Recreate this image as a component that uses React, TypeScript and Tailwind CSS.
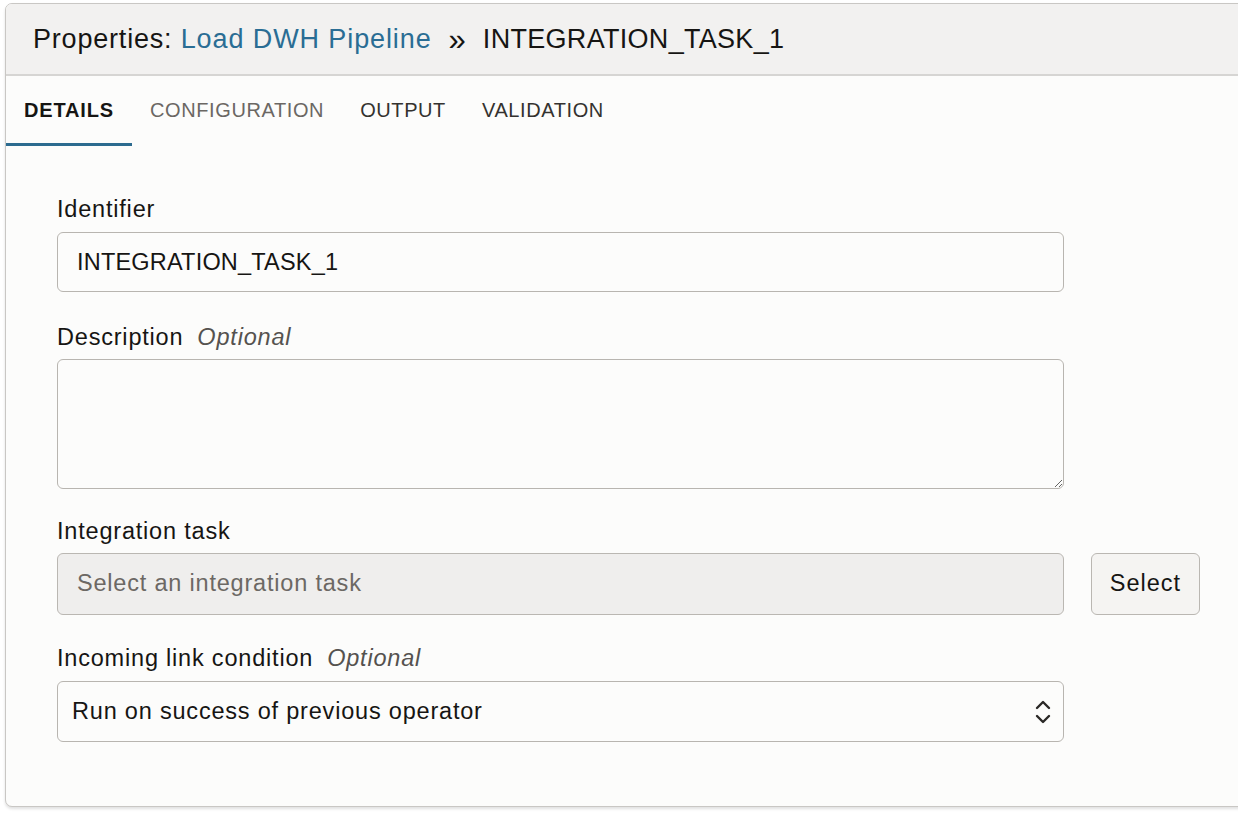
import React from 'react';

const font = { fontFamily: '"Liberation Sans", Arial, Helvetica, sans-serif' };

const tabs = [
  { label: 'DETAILS', cls: 'font-bold text-[#161513] border-[#2c6b8f] tracking-[0.85px]' },
  { label: 'CONFIGURATION', cls: 'text-[#6b6763] border-transparent tracking-[0.6px]' },
  { label: 'OUTPUT', cls: 'text-[#34322f] border-transparent tracking-[0.6px]' },
  { label: 'VALIDATION', cls: 'text-[#34322f] border-transparent tracking-[0.6px]' },
];

function Label({ text, optional }: { text: string; optional?: boolean }) {
  return (
    <div className="flex h-[28px] items-center gap-[14px] text-[23.5px] leading-[28px] tracking-[0.8px] text-[#161513]">
      <span>{text}</span>
      {optional && <span className="italic text-[#55524f]">Optional</span>}
    </div>
  );
}

function Chevrons() {
  return (
    <svg width="18" height="28" viewBox="0 0 18 28" fill="none" aria-hidden>
      <path d="M3 10 L9 4 L15 10" stroke="#2a2826" strokeWidth="2.4" strokeLinecap="round" strokeLinejoin="round" />
      <path d="M3 18 L9 24 L15 18" stroke="#2a2826" strokeWidth="2.4" strokeLinecap="round" strokeLinejoin="round" />
    </svg>
  );
}

export default function App() {
  return (
    <div className="h-[816px] w-[1238px] overflow-hidden bg-white pl-[5px] pt-[3px]" style={font}>
      <div className="flex h-[804px] w-[1260px] flex-col overflow-hidden rounded-[7px] border border-[#c9c7c4] bg-[#fcfcfb] shadow-[0_2px_3px_rgba(0,0,0,0.12)]">
        {/* header */}
        <div className="flex h-[72px] shrink-0 items-center border-b-2 border-[#d6d5d3] bg-[#f2f1f0] pl-[27px] text-[27px] text-[#161513]">
          <span className="tracking-[0.8px]">Properties:&nbsp;</span>
          <span className="tracking-[0.9px] text-[#2a6d94]">Load DWH Pipeline</span>
          <span className="mx-[17px] text-[31px] leading-none">»</span>
          <span className="tracking-[0.3px]">INTEGRATION_TASK_1</span>
        </div>

        {/* tabs */}
        <div className="flex h-[70px] shrink-0">
          {tabs.map((t) => (
            <div
              key={t.label}
              className={`flex h-full items-center border-b-[3px] px-[18px] text-[20px] ${t.cls}`}
            >
              {t.label}
            </div>
          ))}
        </div>

        {/* form */}
        <div className="flex flex-col pl-[51px] pt-[49px]">
          <Label text="Identifier" />
          <input
            readOnly
            value="INTEGRATION_TASK_1"
            className="mt-[9px] h-[60px] w-[1007px] rounded-[6px] border border-[#b8b5b0] bg-[#fcfcfb] pl-[19px] text-[23.5px] tracking-[0.2px] text-[#161513] outline-none"
          />

          <div className="mt-[31px]">
            <Label text="Description" optional />
          </div>
          <textarea
            className="mt-[8px] h-[130px] w-[1007px] resize rounded-[6px] border border-[#b8b5b0] bg-[#fcfcfb] outline-none"
          />

          <div className="mt-[28px]">
            <Label text="Integration task" />
          </div>
          <div className="mt-[8px] flex items-center gap-[27px]">
            <div className="flex h-[62px] w-[1007px] items-center rounded-[6px] border border-[#bab7b2] bg-[#efeeed] pl-[19px] text-[23.5px] tracking-[0.8px] text-[#6c6864]">
              Select an integration task
            </div>
            <button className="h-[62px] w-[109px] rounded-[6px] border border-[#bab7b2] bg-[#f5f4f2] text-[23.5px] tracking-[1px] text-[#161513]">
              Select
            </button>
          </div>

          <div className="mt-[29px]">
            <Label text="Incoming link condition" optional />
          </div>
          <div className="mt-[9px] flex h-[61px] w-[1007px] items-center justify-between rounded-[6px] border border-[#b8b5b0] bg-[#fcfcfb] pl-[14px] pr-[11px] text-[23.5px] tracking-[0.8px] text-[#161513]">
            <span>Run on success of previous operator</span>
            <Chevrons />
          </div>
        </div>
      </div>
    </div>
  );
}
